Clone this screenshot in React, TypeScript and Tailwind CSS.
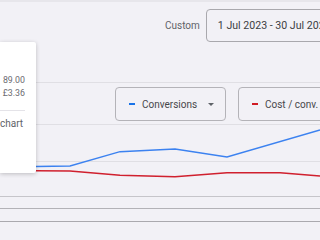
import React from 'react'

const blue: [number, number][] = [
  [0, 124.5], [36, 124.5], [70, 124], [120, 109.7], [175, 107], [227, 115], [320, 88],
]
const red: [number, number][] = [
  [0, 128.7], [36, 128.7], [70, 129], [120, 133.3], [175, 134.7], [227, 130.7], [280, 130.7], [320, 134],
]

const toPoints = (pts: [number, number][]) => pts.map(([x, y]) => `${x},${y}`).join(' ')

function MetricSelect({ label, color, width, caret }: { label: string; color: string; width: string; caret?: boolean }) {
  return (
    <div className={`${width} h-[34px] shrink-0 flex items-center pl-[13px] border border-[#b4b3b8] rounded-[4px] bg-[#f2f1f6]`}>
      <span className={`w-[6px] h-[2px] ${color}`} />
      <span className="ml-[7px] text-[10px] text-[#47474a] whitespace-nowrap">{label}</span>
      {caret && (
        <span className="ml-[11px] w-0 h-0 border-l-[3px] border-r-[3px] border-t-[3px] border-l-transparent border-r-transparent border-t-[#5f6368]" />
      )}
    </div>
  )
}

export default function App() {
  return (
    <div
      className="relative w-[320px] h-[240px] overflow-hidden bg-[#f2f1f6]"
      style={{ fontFamily: 'Roboto, "Noto Sans", sans-serif' }}
    >
      {/* top edge */}
      <div className="h-[2px] bg-[#e7e6eb]" />

      {/* date range header */}
      <div className="h-[40px] flex items-start pt-[7px] pl-[165px] whitespace-nowrap">
        <span className="h-[33px] flex items-center text-[10px] text-[#5f6368]">Custom</span>
        <div className="ml-[6px] w-[150px] h-[33px] shrink-0 flex items-center pl-[11px] border border-[#a9a8ad] rounded-[4px]">
          <span className="text-[10.6px] text-[#3c4043]">1 Jul 2023 - 30 Jul 2023</span>
        </div>
      </div>

      {/* chart */}
      <div className="relative h-[154px]">
        <svg className="absolute inset-0" width="320" height="154" viewBox="0 0 320 154">
          <line x1="0" y1="40.5" x2="320" y2="40.5" stroke="#e0dfe4" strokeWidth="1" />
          <line x1="0" y1="82.5" x2="320" y2="82.5" stroke="#e0dfe4" strokeWidth="1" />
          <line x1="0" y1="119.5" x2="320" y2="119.5" stroke="#e0dfe4" strokeWidth="1" />
          <polyline points={toPoints(red)} fill="none" stroke="#d0202e" strokeWidth="1.4" />
          <polyline points={toPoints(blue)} fill="none" stroke="#3c82f0" strokeWidth="1.4" />
        </svg>
        <div className="relative flex gap-[12px] pt-[45px] pl-[115px]">
          <MetricSelect label="Conversions" color="bg-[#1a73e8]" width="w-[111px]" caret />
          <MetricSelect label="Cost / conv." color="bg-[#d01c24]" width="w-[110px]" />
        </div>
      </div>

      {/* axis lines */}
      <div className="h-[12px] border-t border-[#c6c5ca]" />
      <div className="h-[13px] border-t border-[#b3b2b7]" />
      <div className="border-t border-[#aaa9ae]" />

      {/* hover tooltip */}
      <div className="absolute top-[42px] left-0 w-[36px] h-[131px] bg-white rounded-r-[2px] shadow-[0_1px_4px_rgba(0,0,0,0.22)]">
        <div className="pt-[32px] pr-[11px] flex flex-col items-end text-[8.8px] leading-[13px] text-[#6b6b70]">
          <span>89.00</span>
          <span>£3.36</span>
        </div>
        <div className="mt-[10px] w-[25px] border-t border-[#e4e3e8]" />
        <div className="mt-[6px] text-[10px] leading-[13px] text-[#5f6368]">chart</div>
      </div>
    </div>
  )
}
